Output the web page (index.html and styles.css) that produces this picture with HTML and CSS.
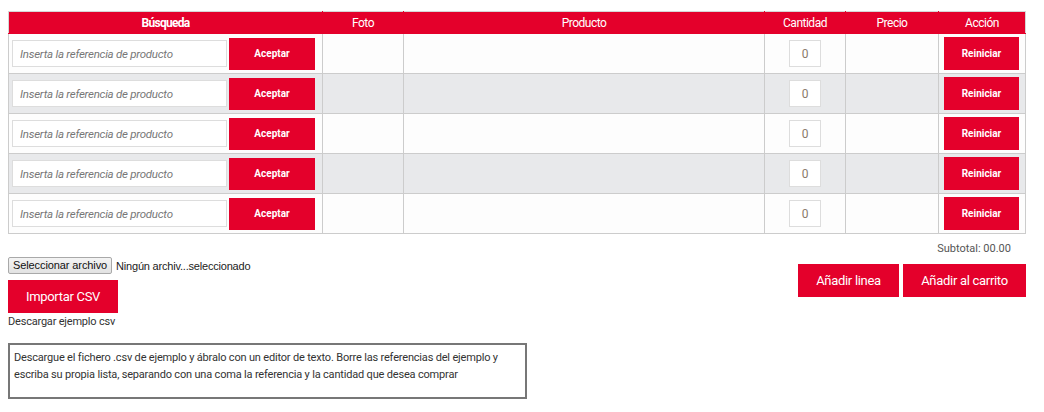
FILE: index.html
```html
<!DOCTYPE html>
<html lang="es">
<head>
<meta charset="utf-8">
<title>Pedido rápido</title>
<link rel="stylesheet" href="styles.css">
</head>
<body>
<div class="page">
  <table class="order">
    <colgroup>
      <col class="c-search"><col class="c-photo"><col class="c-product"><col class="c-qty"><col class="c-price"><col class="c-action">
    </colgroup>
    <thead>
      <tr>
        <th class="th-strong">Búsqueda</th><th>Foto</th><th>Producto</th><th>Cantidad</th><th>Precio</th><th>Acción</th>
      </tr>
    </thead>
    <tbody>
      <tr>
        <td class="search"><div class="search-box"><input class="ref" type="text" placeholder="Inserta la referencia de producto"><button class="btn btn-sm">Aceptar</button></div></td>
        <td></td><td></td>
        <td class="qty"><input class="qty-in" type="text" value="0"></td>
        <td></td>
        <td class="action"><button class="btn btn-sm btn-reset">Reiniciar</button></td>
      </tr>
      <tr class="alt">
        <td class="search"><div class="search-box"><input class="ref" type="text" placeholder="Inserta la referencia de producto"><button class="btn btn-sm">Aceptar</button></div></td>
        <td></td><td></td>
        <td class="qty"><input class="qty-in" type="text" value="0"></td>
        <td></td>
        <td class="action"><button class="btn btn-sm btn-reset">Reiniciar</button></td>
      </tr>
      <tr>
        <td class="search"><div class="search-box"><input class="ref" type="text" placeholder="Inserta la referencia de producto"><button class="btn btn-sm">Aceptar</button></div></td>
        <td></td><td></td>
        <td class="qty"><input class="qty-in" type="text" value="0"></td>
        <td></td>
        <td class="action"><button class="btn btn-sm btn-reset">Reiniciar</button></td>
      </tr>
      <tr class="alt">
        <td class="search"><div class="search-box"><input class="ref" type="text" placeholder="Inserta la referencia de producto"><button class="btn btn-sm">Aceptar</button></div></td>
        <td></td><td></td>
        <td class="qty"><input class="qty-in" type="text" value="0"></td>
        <td></td>
        <td class="action"><button class="btn btn-sm btn-reset">Reiniciar</button></td>
      </tr>
      <tr>
        <td class="search"><div class="search-box"><input class="ref" type="text" placeholder="Inserta la referencia de producto"><button class="btn btn-sm">Aceptar</button></div></td>
        <td></td><td></td>
        <td class="qty"><input class="qty-in" type="text" value="0"></td>
        <td></td>
        <td class="action"><button class="btn btn-sm btn-reset">Reiniciar</button></td>
      </tr>
    </tbody>
  </table>

  <div class="footer">
    <div class="import">
      <div class="file-row">
        <span class="file-btn">Seleccionar archivo</span>
        <span class="file-name">Ningún archiv...seleccionado</span>
      </div>
      <button class="btn btn-lg btn-import">Importar CSV</button>
      <a class="sample" href="#">Descargar ejemplo csv</a>
      <div class="help">Descargue el fichero .csv de ejemplo y ábralo con un editor de texto. Borre las referencias del ejemplo y escriba su propia lista, separando con una coma la referencia y la cantidad que desea comprar</div>
    </div>
    <div class="totals">
      <div class="subtotal">Subtotal: 00.00</div>
      <div class="actions">
        <button class="btn btn-lg btn-line">Añadir linea</button>
        <button class="btn btn-lg btn-cart">Añadir al carrito</button>
      </div>
    </div>
  </div>
</div>
</body>
</html>
```

FILE: styles.css
```css
* { box-sizing: border-box; }

body {
  margin: 0;
  background: #ffffff;
  font-family: Roboto, "Liberation Sans", Arial, sans-serif;
  color: #333333;
}

.page {
  padding: 11px 0 0 8px;
  width: 1026px;
}

.order {
  border-collapse: collapse;
  table-layout: fixed;
  width: 1017px;
  font-size: 12px;
}

.c-search { width: 314px; }
.c-photo { width: 81px; }
.c-product { width: 361px; }
.c-qty { width: 81px; }
.c-price { width: 93px; }
.c-action { width: 87px; }

.order th {
  background: #e4002b;
  color: #ffffff;
  font-weight: 400;
  font-size: 12px;
  letter-spacing: -0.5px;
  height: 22px;
  padding: 0;
  border: 1px solid #e4002b;
  border-top-color: #d6d6d6;
  text-align: center;
}
.order th:first-child { border-left-color: #d6d6d6; }
.order th:last-child { border-right-color: #d6d6d6; }
.order .th-strong { font-weight: 700; letter-spacing: -0.7px; }

.order td {
  border: 1px solid #cccccc;
  height: 40px;
  padding: 0;
  background: #fdfdfd;
  vertical-align: middle;
}
.order tr.alt td { background: #e8e9eb; }

.search-box {
  display: flex;
  align-items: center;
  gap: 2px;
  padding: 0 6px 0 3px;
}

.ref {
  width: 215px;
  height: 27px;
  border: 1px solid #dddddd;
  background: #ffffff;
  padding: 0 7px;
  font-family: Roboto, sans-serif;
  font-size: 11.5px;
  letter-spacing: -0.25px;
  color: #555555;
  outline: none;
}
.ref::placeholder { color: #777777; font-style: italic; }

.btn {
  border: 0;
  background: #e4002b;
  color: #ffffff;
  font-family: Roboto, sans-serif;
  cursor: pointer;
  padding: 0;
}
.btn-sm {
  width: 86px;
  height: 32px;
  font-size: 10px;
  font-weight: 700;
}
.btn-reset { width: 75px; height: 33px; }

.qty { text-align: center; }
.qty-in {
  width: 32px;
  height: 27px;
  border: 1px solid #dddddd;
  background: #ffffff;
  text-align: center;
  font-family: Roboto, sans-serif;
  font-size: 12px;
  color: #8a7a6a;
  padding: 0;
  outline: none;
  display: block;
  margin: 0 auto;
}

.action { text-align: center; }
.action .btn { display: block; margin: 0 0 0 5px; }

.footer {
  display: flex;
  justify-content: space-between;
  width: 1017px;
}

.import {
  display: flex;
  flex-direction: column;
  align-items: flex-start;
  padding-top: 23px;
}

.file-row {
  display: flex;
  align-items: center;
  gap: 4px;
  height: 17px;
}
.file-btn {
  display: inline-block;
  height: 17px;
  line-height: 15px;
  padding: 0 4px;
  border: 1px solid #a9a9a9;
  border-radius: 2px;
  background: linear-gradient(#f4f4f4, #e2e2e2);
  color: #111111;
  font-family: "Liberation Sans", Arial, sans-serif;
  font-size: 11px;
  letter-spacing: -0.1px;
}
.file-name {
  color: #222222;
  font-family: "Liberation Sans", Arial, sans-serif;
  font-size: 11px;
  letter-spacing: -0.2px;
}

.btn-lg {
  height: 33px;
  font-size: 13px;
  letter-spacing: -0.3px;
  font-weight: 400;
}
.btn-import {
  width: 110px;
  margin-top: 6px;
}

.sample {
  margin-top: 2px;
  font-size: 11px;
  letter-spacing: -0.2px;
  color: #333333;
  text-decoration: none;
  line-height: 14px;
}

.help {
  margin-top: 14px;
  width: 519px;
  height: 56px;
  border: 2px solid #777777;
  padding: 4px 4px 0 4px;
  font-size: 11px;
  letter-spacing: -0.18px;
  line-height: 17px;
  color: #333333;
}

.totals {
  display: flex;
  flex-direction: column;
  align-items: flex-end;
  padding-top: 8px;
}
.subtotal {
  font-size: 11px;
  color: #555555;
  padding-right: 14px;
  line-height: 14px;
}
.actions {
  display: flex;
  gap: 4px;
  margin-top: 8px;
  margin-right: -1px;
}
.btn-line { width: 101px; }
.btn-cart { width: 123px; }
```
